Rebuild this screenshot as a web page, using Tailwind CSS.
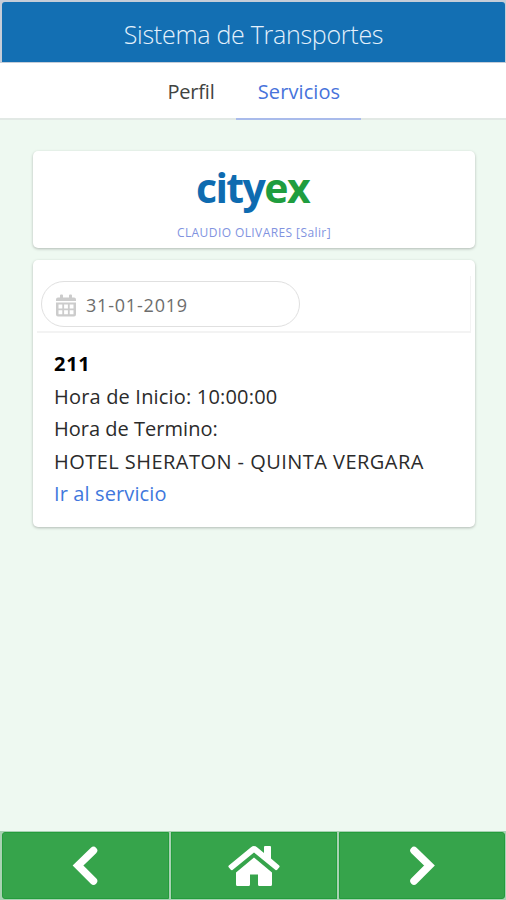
<!DOCTYPE html>
<html lang="es">
<head>
<meta charset="utf-8">
<title>Sistema de Transportes</title>
<script src="https://cdn.jsdelivr.net/npm/@tailwindcss/browser@4"></script>
</head>
<body class="w-[506px] h-[900px] overflow-hidden bg-[#eef9f1] flex flex-col font-['Open_Sans','Noto_Sans',sans-serif] text-[#2b2b2b] whitespace-nowrap">
<header class="h-[63px] shrink-0 bg-[#c5cdd8] px-px pt-0.5 pb-px pl-0.5">
  <h1 class="h-full rounded-t-[3px] bg-[#136fb3] flex items-center justify-center pt-1.5 text-[25px] font-light text-[#e4f1fc] tracking-[-0.27px]"><span>Sistema de Transportes</span></h1>
</header>
<nav class="h-[57px] shrink-0 bg-white border-b-2 border-[#e2e9e5] flex pl-[146px] text-[20px]">
  <a class="w-[90px] h-[57px] flex justify-center items-center pt-0.5 pb-0.5 tracking-[-0.2px] text-[#414341]"><span>Perfil</span></a>
  <a class="w-[125px] h-[57px] flex justify-center items-center pt-0.5 pl-px text-[#4773db] border-b-2 border-[#a9bbeb] tracking-[0.1px]"><span>Servicios</span></a>
</nav>
<main class="flex-1 px-8 pt-[31px] pl-[33px]">
  <section class="w-[442px] h-[97px] rounded-[5px] bg-white shadow-[0_1px_3px_rgba(0,0,0,0.26)] flex flex-col items-center">
    <div class="h-[73px] pt-[8px] pr-[3px] text-[41px] leading-[56px] font-bold tracking-[-1.6px]"><span class="text-[#0e6bb0]">city</span><span class="text-[#1f9d3f]">ex</span></div>
    <a class="text-[12px] leading-[18px] text-[#8193df] tracking-[0.41px]"><span>CLAUDIO OLIVARES [Salir]</span></a>
  </section>
  <section class="mt-3 w-[442px] h-[267px] rounded-[5px] bg-white shadow-[0_1px_3px_rgba(0,0,0,0.26)] flex flex-col px-1">
    <div class="mt-4 h-[57px] shrink-0 border-b-2 border-r border-[#f3f3f3] pl-1 pt-[5px]">
      <div class="w-[259px] h-[46px] rounded-full border border-[#e0e0e0] flex items-center pl-[14px] pt-0.5 text-[18px] text-[#6d6d6d]">
        <svg class="w-5 h-[23px] shrink-0" viewBox="0 0 20 23" fill="#cccccc"><path d="M4 1.5q0-1 1-1h1q1 0 1 1v2h6v-2q0-1 1-1h1q1 0 1 1v2h2q2 0 2 2v1.500H0V5.500q0-2 2-2h2zM0 8.500h20v12q0 2-2 2H2q-2 0-2-2zM2.500 10.500v4h3.800v-4zm5.600 0v4h3.800v-4zm5.600 0v4h3.800v-4zM2.500 16.300v4h3.800v-4zm5.600 0v4h3.800v-4zm5.600 0v4h3.800v-4z" fill-rule="evenodd"/></svg>
        <span class="ml-[10px] tracking-[0.8px]">31-01-2019</span>
      </div>
    </div>
    <div class="pl-[17px] pt-[15px] text-[20px] leading-[32.5px]">
      <p class="font-bold text-black tracking-[0.7px]"><span>211</span></p>
      <p class="tracking-[0.18px]"><span>Hora de Inicio: 10:00:00</span></p>
      <p class="tracking-[0.02px]"><span>Hora de Termino:</span></p>
      <p class="tracking-[0.46px]"><span>HOTEL SHERATON - QUINTA VERGARA</span></p>
      <p class="tracking-[0.12px] text-[#3f78dd]"><span>Ir al servicio</span></p>
    </div>
  </section>
</main>
<footer class="h-[69px] shrink-0 bg-[#a9d2b3] grid grid-cols-[167px_166px_166px] gap-x-0.5 pl-0.5 pr-px pt-px pb-px">
  <button class="rounded-l-[3px] bg-[#36a44b] border border-[#249c3c] flex justify-center items-center"><svg class="w-[52px] h-10" viewBox="0 0 52 40" fill="none" stroke="#fff" stroke-width="7.500"><path d="M33.500 4.500L18 19.500l15.500 15.500" stroke-linecap="round"/></svg></button>
  <button class="bg-[#36a44b] border border-[#249c3c] flex justify-center items-center"><svg class="w-[52px] h-[42px]" viewBox="0 0 52 42" fill="#fff"><path d="M26 12.500L8 27.500V39.500Q8 41 9.500 41H20.500Q22 41 22 39.500V29.500H30V39.500Q30 41 31.500 41H42.500Q44 41 44 39.500V27.500Z"/><path d="M.8 20.500L23 2.200Q26 0 29 2.200L36 8V2Q36 1 37 1H42Q43 1 43 2V13.500L51.200 20.500Q52 21.300 51.300 22.200L49.200 24.700Q48.300 25.500 47.500 24.900L26 7.500L4.500 24.900Q3.700 25.500 2.800 24.700L.7 22.200Q0 21.300 .8 20.500Z"/></svg></button>
  <button class="rounded-r-[3px] bg-[#36a44b] border border-[#249c3c] flex justify-center items-center"><svg class="w-[52px] h-10" viewBox="0 0 52 40" fill="none" stroke="#fff" stroke-width="7.500"><path d="M18 4.500L33.500 19.500L18 35" stroke-linecap="round"/></svg></button>
</footer>
</body>
</html>
